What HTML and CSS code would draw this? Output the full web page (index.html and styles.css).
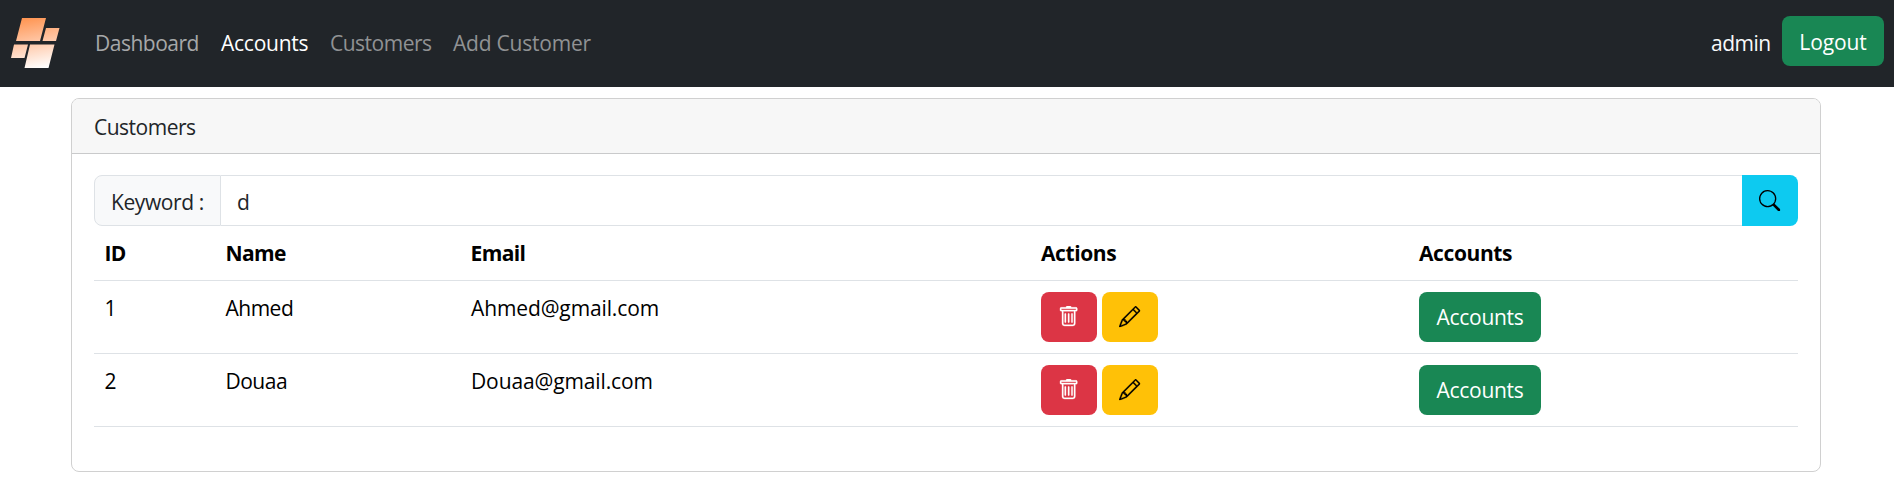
FILE: index.html
```
<!DOCTYPE html>
<html lang="en">
<head>
<meta charset="utf-8">
<title>Customers</title>
<link rel="stylesheet" href="styles.css">
</head>
<body>
<svg class="sprite" aria-hidden="true">
  <symbol id="trash" viewBox="0 0 16 16">
    <path d="M5.5 5.5A.5.5 0 0 1 6 6v6a.5.5 0 0 1-1 0V6a.5.5 0 0 1 .5-.5Zm2.500 0a.5.5 0 0 1 .5.5v6a.5.5 0 0 1-1 0V6a.5.5 0 0 1 .5-.5Zm3 .5a.5.5 0 0 0-1 0v6a.5.5 0 0 0 1 0V6Z"/>
    <path d="M14.500 3a1 1 0 0 1-1 1H13v9a2 2 0 0 1-2 2H5a2 2 0 0 1-2-2V4h-.5a1 1 0 0 1-1-1V2a1 1 0 0 1 1-1H6a1 1 0 0 1 1-1h2a1 1 0 0 1 1 1h3.500a1 1 0 0 1 1 1v1ZM4.118 4 4 4.059V13a1 1 0 0 0 1 1h6a1 1 0 0 0 1-1V4.059L11.882 4H4.118ZM2.500 3h11V2h-11v1Z"/>
  </symbol>
  <symbol id="pencil" viewBox="0 0 16 16">
    <path d="M12.146.146a.5.5 0 0 1 .708 0l3 3a.5.5 0 0 1 0 .708l-10 10a.5.5 0 0 1-.168.11l-5 2a.5.5 0 0 1-.65-.65l2-5a.5.5 0 0 1 .11-.168l10-10zM11.207 2.500 13.500 4.793 14.793 3.500 12.500 1.207 11.207 2.500zm1.586 3L10.500 3.207 4 9.707V10h.5a.5.5 0 0 1 .5.5v.5h.5a.5.5 0 0 1 .5.5v.5h.293l6.500-6.500zm-9.761 5.175-.106.106-1.528 3.821 3.821-1.528.106-.106A.5.5 0 0 1 5 12.500V12h-.5a.5.5 0 0 1-.5-.5V11h-.5a.5.5 0 0 1-.468-.325z"/>
  </symbol>
  <symbol id="search" viewBox="0 0 16 16">
    <path d="M11.742 10.344a6.500 6.500 0 1 0-1.397 1.398h-.001c.03.04.062.078.098.115l3.850 3.850a1 1 0 0 0 1.415-1.414l-3.850-3.850a1.007 1.007 0 0 0-.115-.1zM12 6.500a5.500 5.500 0 1 1-11 0 5.500 5.500 0 0 1 11 0z"/>
  </symbol>
</svg>

<nav class="navbar">
  <svg class="logo" viewBox="0 0 50 54" role="img" aria-label="Logo">
    <defs>
      <linearGradient id="brand" gradientUnits="userSpaceOnUse" x1="18" y1="1" x2="28" y2="53">
        <stop offset="0" stop-color="#ff9450"/>
        <stop offset=".45" stop-color="#ffc3a0"/>
        <stop offset="1" stop-color="#ffffff"/>
      </linearGradient>
    </defs>
    <path fill="url(#brand)" d="M12 2H36L30 25H6ZM36 12H49.500L46 25H32.500ZM4 28.500H18L14.500 42H1ZM20 28.500H44.500L38.500 52H14.500Z"/>
  </svg>
  <a class="nav-link nav-dashboard">Dashboard</a>
  <a class="nav-link active nav-accounts">Accounts</a>
  <a class="nav-link dim nav-customers">Customers</a>
  <a class="nav-link dim nav-add">Add Customer</a>
  <span class="user">admin</span>
  <button class="btn btn-success logout">Logout</button>
</nav>

<main class="card">
  <header class="card-header">Customers</header>
  <div class="card-body">
    <form class="input-group">
      <label class="addon" for="kw">Keyword :</label>
      <input class="control" id="kw" value="d">
      <button class="btn btn-info" type="button" aria-label="Search"><svg class="icon"><use href="#search"/></svg></button>
    </form>
    <table class="table">
      <colgroup><col class="c-id"><col class="c-name"><col class="c-email"><col class="c-actions"><col></colgroup>
      <thead>
        <tr><th>ID</th><th>Name</th><th>Email</th><th class="wide">Actions</th><th class="wide">Accounts</th></tr>
      </thead>
      <tbody>
        <tr>
          <td>1</td><td>Ahmed</td><td class="email">Ahmed@gmail.com</td>
          <td><div class="actions">
            <button class="btn btn-danger" aria-label="Delete"><svg class="icon"><use href="#trash"/></svg></button>
            <button class="btn btn-warning" aria-label="Edit"><svg class="icon"><use href="#pencil"/></svg></button>
          </div></td>
          <td><button class="btn btn-success accounts">Accounts</button></td>
        </tr>
        <tr>
          <td>2</td><td>Douaa</td><td class="email">Douaa@gmail.com</td>
          <td><div class="actions">
            <button class="btn btn-danger" aria-label="Delete"><svg class="icon"><use href="#trash"/></svg></button>
            <button class="btn btn-warning" aria-label="Edit"><svg class="icon"><use href="#pencil"/></svg></button>
          </div></td>
          <td><button class="btn btn-success accounts">Accounts</button></td>
        </tr>
      </tbody>
    </table>
  </div>
</main>
</body>
</html>
```
FILE: styles.css
```
* { box-sizing: border-box; }
body {
  margin: 0;
  background: #fff;
  color: #212529;
  font-family: "Open Sans", "Noto Sans", sans-serif;
  font-size: 21px;
  line-height: 32px;
  letter-spacing: -0.5px;
}
.sprite { display: none; }
.icon { display: block; width: 21.33px; height: 21.33px; fill: currentColor; }

.navbar {
  display: flex;
  align-items: center;
  height: 87px;
  padding: 0 10px;
  background: #212529;
}
.logo { width: 50px; height: 54px; margin: 0 35px 2px 0; }
.nav-link { padding-bottom: 2px; white-space: nowrap; color: #a6a8a9; }
.nav-link.dim { color: #909294; }
.nav-link.active { color: #fff; }
.nav-dashboard { width: 126px; }
.nav-accounts { width: 109px; letter-spacing: -0.25px; }
.nav-customers { width: 123px; }
.nav-add { letter-spacing: -0.22px; }
.user { width: 71px; margin-left: auto; padding-bottom: 2px; color: #f8f9fa; }

.btn {
  display: flex;
  align-items: center;
  justify-content: center;
  height: 50px;
  padding: 0;
  border: 0;
  border-radius: 8px;
  font: inherit;
  letter-spacing: -0.3px;
}
.btn-success { background: #198754; color: #fff; }
.btn-danger { width: 56px; background: #dc3545; color: #fff; }
.btn-danger .icon { stroke: currentColor; stroke-width: .25px; }
.btn-warning { width: 56px; background: #ffc107; color: #000; }
.btn-warning .icon { stroke: currentColor; stroke-width: .2px; }
.btn-info { width: 56px; height: 51px; border-radius: 0 8px 8px 0; background: #0dcaf0; color: #000; }
.logout { width: 102px; margin-bottom: 5px; padding-top: 1px; letter-spacing: -0.1px; }
.accounts { width: 122px; }
.actions { display: flex; gap: 5px; }

.card {
  width: 1750px;
  height: 374px;
  margin: 11px 0 0 71px;
  border: 1px solid #d0d0d0;
  border-radius: 8px;
}
.card-header {
  height: 55px;
  padding: 12px 22px;
  border-bottom: 1px solid #c9cacb;
  border-radius: 7px 7px 0 0;
  background: #f7f7f7;
}
.card-body { padding: 21px 22px; }
.input-group { display: flex; height: 51px; margin: 0; }
.addon {
  width: 127px;
  padding: 10px 0 0 16px;
  border: 1px solid #dee2e6;
  border-radius: 8px 0 0 8px;
  background: #f8f9fa;
  letter-spacing: -0.4px;
}
.control {
  flex: 1;
  min-width: 0;
  padding: 2px 16px 0;
  border: 1px solid #dee2e6;
  border-width: 1px 0;
  border-radius: 0;
  background: #fff;
  color: #212529;
  font: inherit;
  outline: 0;
}
.table {
  width: 1704px;
  table-layout: fixed;
  border-collapse: separate;
  border-spacing: 0;
  color: #000;
}
.c-id { width: 121px; }
.c-name { width: 245px; }
.c-email { width: 570px; }
.c-actions { width: 378px; }
.table th, .table td {
  padding: 11px 11px 11px 10.5px;
  border-bottom: 1px solid #dee2e6;
  text-align: left;
  vertical-align: top;
}
.table th { letter-spacing: -0.6px; }
.table th.wide { padding-left: 11px; letter-spacing: -0.4px; }
.table td:nth-child(n+3) { padding-left: 11px; }
.table td.email { letter-spacing: -0.12px; }
.table tr { height: 73px; }
.table thead tr { height: 55px; }
```
